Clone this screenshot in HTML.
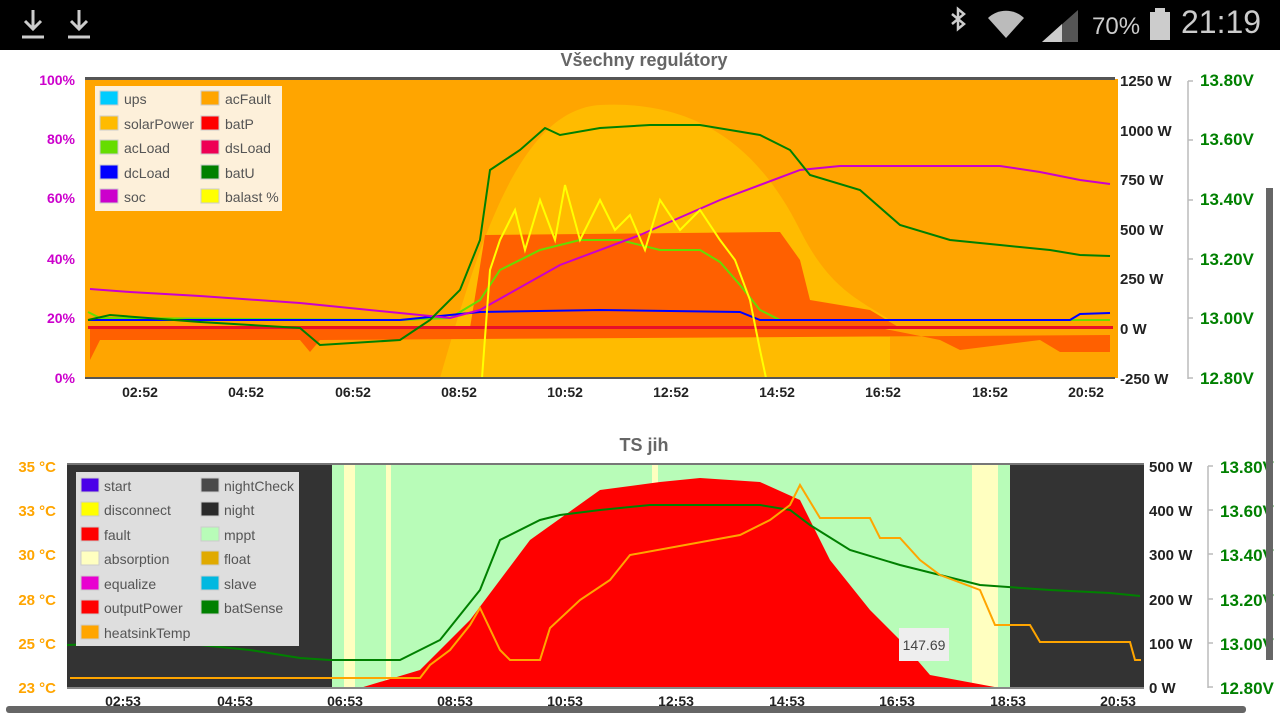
<!DOCTYPE html>
<html><head><meta charset="utf-8"><style>
body{margin:0;width:1280px;height:720px;overflow:hidden;background:#fff;font-family:"Liberation Sans",sans-serif}
svg{position:absolute;left:0;top:0}
</style></head><body>
<svg width="1280" height="720" viewBox="0 0 1280 720" font-family="Liberation Sans, sans-serif">
<!-- status bar -->
<rect x="0" y="0" width="1280" height="50" fill="#000"/>
<g stroke="#ccc" stroke-width="3" fill="none">
<path d="M33 10v18M25 21l8 8 8-8M22 37h22"/>
<path d="M79 10v18M71 21l8 8 8-8M68 37h22"/>
</g>
<path d="M952 14l12 10-6 5V9l6 5-12 10" stroke="#ccc" stroke-width="2.5" fill="none"/>
<path d="M988 18a26 26 0 0 1 36 0l-18 20z" fill="#bbb"/>
<path d="M1042 42L1078 10V42z" fill="#555"/><path d="M1042 42L1062 24V42z" fill="#ccc"/>
<text x="1092" y="34" font-size="24" fill="#ccc">70%</text>
<rect x="1150" y="12" width="20" height="28" fill="#ccc"/><rect x="1155" y="8" width="10" height="4" fill="#ccc"/>
<text x="1181" y="33" font-size="32" fill="#ccc">21:19</text>

<!-- top chart -->
<text x="644" y="66" font-size="18" font-weight="bold" fill="#666" text-anchor="middle">Všechny regulátory</text>
<rect x="85" y="79" width="1033" height="299" fill="#FFA500"/>
<rect x="85" y="77" width="1030" height="3" fill="#555"/>
<path d="M440 378 C480 240 520 110 600 105 C700 100 760 150 800 230 C830 290 860 300 890 320 L890 378Z" fill="#FFBB00"/>
<path d="M90 328 L90 360 L100 340 L300 340 L310 352 L320 340 L1110 335 L1110 352 L1060 352 L1040 340 L960 350 L940 340 L880 328Z" fill="#FF6000"/>
<path d="M470 328 L485 235 L780 232 L800 260 L810 300 L870 310 L900 328Z" fill="#FF6000"/>
<rect x="88" y="326" width="1025" height="3" fill="#E8102A"/>
<polyline fill="none" stroke="#66DD00" stroke-width="2" points="88,312 100,318 400,320 450,318 480,300 500,270 540,250 580,240 620,240 660,250 700,250 720,262 740,285 760,310 780,320 1110,320"/>
<polyline fill="none" stroke="#0000FF" stroke-width="2" points="88,320 400,320 480,312 600,310 740,312 760,320 1070,320 1080,314 1110,313"/>
<polyline fill="none" stroke="#CC00CC" stroke-width="2" points="90,289 130,292 200,296 300,303 400,313 450,318 480,310 560,265 640,235 720,200 800,170 840,166 1000,166 1040,172 1080,180 1110,184"/>
<polyline fill="none" stroke="#FFFF00" stroke-width="2" points="482,378 490,270 500,240 515,210 525,250 540,200 555,240 565,185 580,240 600,200 615,230 630,215 645,250 660,200 680,230 700,210 720,240 735,260 750,300 760,350 766,378 1110,378"/>
<polyline fill="none" stroke="#008000" stroke-width="2" points="88,320 110,315 200,322 300,328 320,345 400,340 430,320 460,290 480,240 490,170 520,150 545,128 560,135 600,128 650,125 700,125 760,135 790,150 810,175 860,190 900,225 950,240 1000,245 1050,250 1080,255 1110,256"/>
<g fill="#FDF0DA"><rect x="95" y="86" width="187" height="125"/></g>
<g font-size="14" fill="#555">
<rect x="100" y="91" width="18" height="14" fill="#00CCFF" stroke="#ccc"/><text x="124" y="104">ups</text>
<rect x="100" y="116" width="18" height="14" fill="#FFBB00" stroke="#ccc"/><text x="124" y="129">solarPower</text>
<rect x="100" y="140" width="18" height="14" fill="#66DD00" stroke="#ccc"/><text x="124" y="153">acLoad</text>
<rect x="100" y="165" width="18" height="14" fill="#0000FF" stroke="#ccc"/><text x="124" y="178">dcLoad</text>
<rect x="100" y="189" width="18" height="14" fill="#CC00CC" stroke="#ccc"/><text x="124" y="202">soc</text>
<rect x="201" y="91" width="18" height="14" fill="#FFA500" stroke="#ccc"/><text x="225" y="104">acFault</text>
<rect x="201" y="116" width="18" height="14" fill="#FF0000" stroke="#ccc"/><text x="225" y="129">batP</text>
<rect x="201" y="140" width="18" height="14" fill="#EE0055" stroke="#ccc"/><text x="225" y="153">dsLoad</text>
<rect x="201" y="165" width="18" height="14" fill="#008000" stroke="#ccc"/><text x="225" y="178">batU</text>
<rect x="201" y="189" width="18" height="14" fill="#FFFF00" stroke="#ccc"/><text x="225" y="202">balast %</text>
</g>
<rect x="85" y="377" width="1030" height="2" fill="#555"/>
<g font-size="14" font-weight="bold" fill="#CC00CC" text-anchor="end">
<text x="75" y="85">100%</text><text x="75" y="144">80%</text><text x="75" y="203">60%</text><text x="75" y="264">40%</text><text x="75" y="323">20%</text><text x="75" y="383">0%</text></g>
<g font-size="14" font-weight="bold" fill="#222" text-anchor="middle">
<text x="140" y="397">02:52</text><text x="246" y="397">04:52</text><text x="353" y="397">06:52</text><text x="459" y="397">08:52</text><text x="565" y="397">10:52</text><text x="671" y="397">12:52</text><text x="777" y="397">14:52</text><text x="883" y="397">16:52</text><text x="990" y="397">18:52</text><text x="1086" y="397">20:52</text></g>
<g font-size="15" font-weight="bold" fill="#222">
<text x="1120" y="86">1250 W</text><text x="1120" y="136">1000 W</text><text x="1120" y="185">750 W</text><text x="1120" y="235">500 W</text><text x="1120" y="284">250 W</text><text x="1120" y="334">0 W</text><text x="1120" y="384">-250 W</text></g>
<g stroke="#bbb" stroke-width="1.5" fill="none">
<path d="M1188 81V379M1188 81h5M1188 140h5M1188 200h5M1188 259h5M1188 318h5M1188 378h5"/></g>
<g font-size="17" font-weight="bold" fill="#008000">
<text x="1200" y="86">13.80V</text><text x="1200" y="145">13.60V</text><text x="1200" y="205">13.40V</text><text x="1200" y="265">13.20V</text><text x="1200" y="324">13.00V</text><text x="1200" y="384">12.80V</text></g>

<!-- bottom chart -->
<text x="644" y="451" font-size="18" font-weight="bold" fill="#666" text-anchor="middle">TS jih</text>
<rect x="67" y="465" width="1077" height="223" fill="#333"/>
<rect x="67" y="463" width="1077" height="2" fill="#777"/>
<rect x="332" y="465" width="678" height="223" fill="#B8FCB8"/>
<g fill="#FFFFC0"><rect x="344" y="465" width="11" height="223"/><rect x="386" y="465" width="5" height="223"/><rect x="652" y="465" width="6" height="223"/><rect x="972" y="465" width="26" height="223"/></g>
<path d="M360 688 L420 670 L470 620 L530 540 L600 490 L660 482 L700 478 L760 482 L800 500 L830 560 L870 610 L900 640 L930 675 L1000 688Z" fill="#FF0000"/>
<polyline fill="none" stroke="#008000" stroke-width="2" points="67,645 150,642 200,645 250,650 300,658 330,660 400,660 440,640 480,590 500,540 540,520 560,515 600,510 650,505 700,505 760,505 790,510 810,525 850,550 900,565 940,575 980,585 1050,590 1110,593 1140,596"/>
<polyline fill="none" stroke="#FFA500" stroke-width="2" points="70,678 420,678 430,665 450,650 470,625 480,608 500,650 510,660 540,660 550,628 580,600 610,580 630,555 740,535 770,520 790,505 800,485 820,518 870,518 880,538 900,538 920,560 940,575 980,590 995,625 1030,625 1040,642 1130,642 1135,660 1141,660"/>
<rect x="899" y="628" width="50" height="33" fill="#eee"/><text x="924" y="650" font-size="14" fill="#444" text-anchor="middle">147.69</text>
<rect x="76" y="472" width="223" height="174" fill="#DEDEDE"/>
<g font-size="14" fill="#555">
<rect x="81" y="478" width="18" height="14" fill="#4B00E8" stroke="#ccc"/><text x="104" y="491">start</text>
<rect x="81" y="502" width="18" height="14" fill="#FFFF00" stroke="#ccc"/><text x="104" y="515">disconnect</text>
<rect x="81" y="527" width="18" height="14" fill="#FF0000" stroke="#ccc"/><text x="104" y="540">fault</text>
<rect x="81" y="551" width="18" height="14" fill="#FFFFC0" stroke="#ccc"/><text x="104" y="564">absorption</text>
<rect x="81" y="576" width="18" height="14" fill="#E800D0" stroke="#ccc"/><text x="104" y="589">equalize</text>
<rect x="81" y="600" width="18" height="14" fill="#FF0000" stroke="#ccc"/><text x="104" y="613">outputPower</text>
<rect x="81" y="625" width="18" height="14" fill="#FFA500" stroke="#ccc"/><text x="104" y="638">heatsinkTemp</text>
<rect x="201" y="478" width="18" height="14" fill="#4A4A4A" stroke="#ccc"/><text x="224" y="491">nightCheck</text>
<rect x="201" y="502" width="18" height="14" fill="#2A2A2A" stroke="#ccc"/><text x="224" y="515">night</text>
<rect x="201" y="527" width="18" height="14" fill="#B8FCB8" stroke="#ccc"/><text x="224" y="540">mppt</text>
<rect x="201" y="551" width="18" height="14" fill="#E0AA00" stroke="#ccc"/><text x="224" y="564">float</text>
<rect x="201" y="576" width="18" height="14" fill="#00B8E0" stroke="#ccc"/><text x="224" y="589">slave</text>
<rect x="201" y="600" width="18" height="14" fill="#008000" stroke="#ccc"/><text x="224" y="613">batSense</text>
</g>
<rect x="67" y="687" width="1077" height="2" fill="#888"/>
<g font-size="15" font-weight="bold" fill="#FFA500" text-anchor="end">
<text x="56" y="472">35 °C</text><text x="56" y="516">33 °C</text><text x="56" y="560">30 °C</text><text x="56" y="605">28 °C</text><text x="56" y="649">25 °C</text><text x="56" y="693">23 °C</text></g>
<g font-size="14" font-weight="bold" fill="#222" text-anchor="middle">
<text x="123" y="706">02:53</text><text x="235" y="706">04:53</text><text x="345" y="706">06:53</text><text x="455" y="706">08:53</text><text x="565" y="706">10:53</text><text x="676" y="706">12:53</text><text x="787" y="706">14:53</text><text x="897" y="706">16:53</text><text x="1008" y="706">18:53</text><text x="1118" y="706">20:53</text></g>
<g font-size="15" font-weight="bold" fill="#222">
<text x="1149" y="472">500 W</text><text x="1149" y="516">400 W</text><text x="1149" y="560">300 W</text><text x="1149" y="605">200 W</text><text x="1149" y="649">100 W</text><text x="1149" y="693">0 W</text></g>
<g stroke="#bbb" stroke-width="1.5" fill="none">
<path d="M1208 466V688M1208 466h5M1208 510h5M1208 554h5M1208 599h5M1208 643h5M1208 687h5"/></g>
<g font-size="17" font-weight="bold" fill="#008000">
<text x="1220" y="473">13.80V</text><text x="1220" y="517">13.60V</text><text x="1220" y="561">13.40V</text><text x="1220" y="606">13.20V</text><text x="1220" y="650">13.00V</text><text x="1220" y="694">12.80V</text></g>

<!-- scrollbars -->
<rect x="1266" y="188" width="7" height="472" fill="#666"/>
<rect x="6" y="706" width="1240" height="7" rx="3" fill="#666"/>
</svg>
</body></html>
